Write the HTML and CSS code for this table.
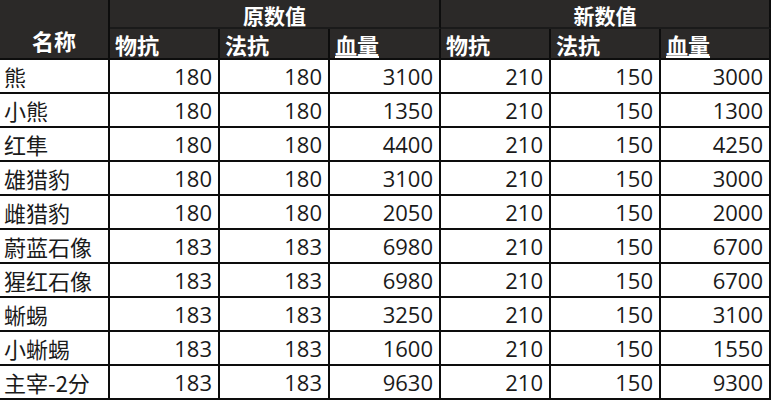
FILE: index.html
```html
<!DOCTYPE html>
<html lang="zh">
<head>
<meta charset="utf-8">
<link rel="stylesheet" href="styles.css">
</head>
<body>
<div class="sheet">
  <div class="h name">名称</div>
  <div class="h group g3">原数值</div>
  <div class="h group g3 last">新数值</div>
  <div class="h sub">物抗</div>
  <div class="h sub">法抗</div>
  <div class="h sub"><u>血量</u></div>
  <div class="h sub">物抗</div>
  <div class="h sub">法抗</div>
  <div class="h sub last"><u>血量</u></div>

  <div class="c t">熊</div><div class="c">180</div><div class="c">180</div><div class="c">3100</div><div class="c">210</div><div class="c">150</div><div class="c last">3000</div>
  <div class="c t">小熊</div><div class="c">180</div><div class="c">180</div><div class="c">1350</div><div class="c">210</div><div class="c">150</div><div class="c last">1300</div>
  <div class="c t">红隼</div><div class="c">180</div><div class="c">180</div><div class="c">4400</div><div class="c">210</div><div class="c">150</div><div class="c last">4250</div>
  <div class="c t">雄猎豹</div><div class="c">180</div><div class="c">180</div><div class="c">3100</div><div class="c">210</div><div class="c">150</div><div class="c last">3000</div>
  <div class="c t">雌猎豹</div><div class="c">180</div><div class="c">180</div><div class="c">2050</div><div class="c">210</div><div class="c">150</div><div class="c last">2000</div>
  <div class="c t">蔚蓝石像</div><div class="c">183</div><div class="c">183</div><div class="c">6980</div><div class="c">210</div><div class="c">150</div><div class="c last">6700</div>
  <div class="c t">猩红石像</div><div class="c">183</div><div class="c">183</div><div class="c">6980</div><div class="c">210</div><div class="c">150</div><div class="c last">6700</div>
  <div class="c t">蜥蜴</div><div class="c">183</div><div class="c">183</div><div class="c">3250</div><div class="c">210</div><div class="c">150</div><div class="c last">3100</div>
  <div class="c t">小蜥蜴</div><div class="c">183</div><div class="c">183</div><div class="c">1600</div><div class="c">210</div><div class="c">150</div><div class="c last">1550</div>
  <div class="c t">主宰-2分</div><div class="c">183</div><div class="c">183</div><div class="c">9630</div><div class="c">210</div><div class="c">150</div><div class="c last">9300</div>
</div>
</body>
</html>
```
FILE: styles.css
```css
html, body {
  margin: 0;
  padding: 0;
  background: #ffffff;
}
body {
  width: 773px;
  height: 400px;
  overflow: hidden;
  font-family: "Noto Sans CJK SC", "Noto Sans", sans-serif;
}
.sheet {
  display: grid;
  grid-template-columns: 110px 110px 110px 111px 110px 110px 110px;
  grid-template-rows: 29px 31px repeat(10, 34px);
  width: 773px;
}
.sheet > div {
  box-sizing: border-box;
  border-right: 2px solid #0d0d0d;
  border-bottom: 2px solid #0d0d0d;
  display: flex;
  align-items: center;
  white-space: nowrap;
}
.h {
  background: #2b2928;
  color: #ffffff;
  font-weight: 700;
  font-size: 22px;
  line-height: 1;
}
.h u {
  text-decoration-thickness: 2px;
  text-underline-offset: 2px;
}
.name {
  grid-row: span 2;
  justify-content: center;
  align-items: flex-end !important;
  padding-bottom: 7px;
}
.group {
  justify-content: center;
  border-bottom-color: #1a1a1a !important;
  font-size: 21px;
  padding-top: 4px;
}
.g3 {
  grid-column: span 3;
}
.sub {
  padding-left: 5px;
  padding-top: 1px;
}
.c {
  background: #ffffff;
  color: #1a1a1a;
  font-family: "Open Sans", "Noto Sans CJK SC", sans-serif;
  font-size: 22px;
  line-height: 1.2;
  justify-content: flex-end;
  padding-right: 6px;
}
.c.t {
  font-family: "Noto Sans CJK SC", sans-serif;
  justify-content: flex-start;
  padding-left: 4px;
  padding-right: 0;
  font-size: 22px;
}
.sheet > .last {
  border-right: 2px solid #0d0d0d;
}
```
